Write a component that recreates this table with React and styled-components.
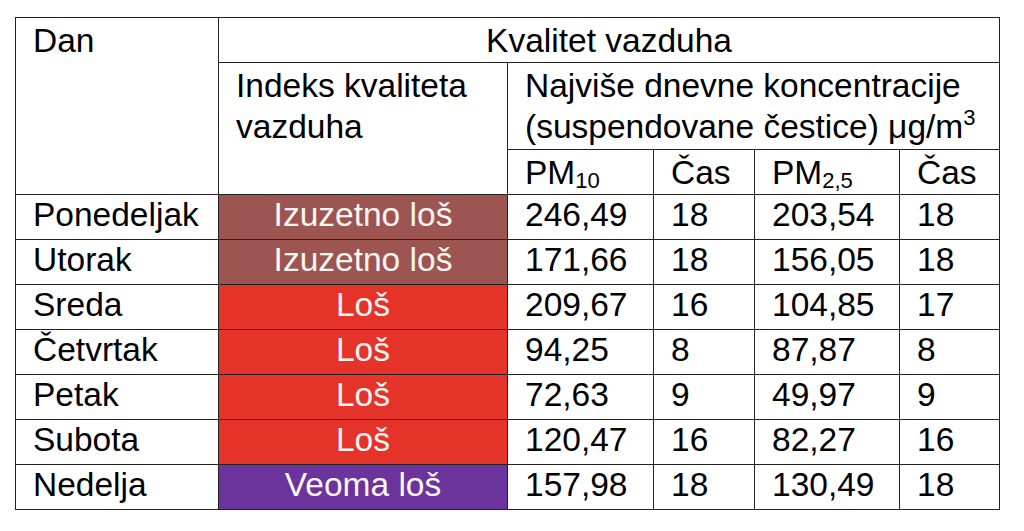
import React from "react";
import styled, { createGlobalStyle } from "styled-components";

const Global = createGlobalStyle`
  html, body { margin: 0; padding: 0; background: #fff; }
  body { font-family: "Liberation Sans", Arial, sans-serif; color: #000; }
`;

const Page = styled.div`
  padding: 17px 0 0 15px;
`;

const Table = styled.table`
  border-collapse: collapse;
  table-layout: fixed;
  width: 985px;
  font-family: "Liberation Sans", Arial, sans-serif;
  font-size: 33.5px;
  color: #000;
`;

const Col = styled.col`
  width: ${(p) => p.$w}px;
`;

const HeadRow = styled.tr`
  height: ${(p) => p.$h}px;
`;

const Th = styled.td`
  border: 1px solid #222;
  padding: 2px 17px 0 17px;
  line-height: 41px;
  vertical-align: top;
  text-align: ${(p) => (p.$center ? "center" : "left")};
  white-space: nowrap;
`;

const Row = styled.tr`
  height: 45px;
`;

const Td = styled.td`
  border: 1px solid #222;
  padding: 0 17px 0 17px;
  line-height: 39px;
  vertical-align: top;
  white-space: nowrap;
`;

const IndexCell = styled(Td)`
  background: ${(p) => p.$bg};
  color: #fbf6f4;
  text-align: center;
`;

const Sub = styled.sub`
  font-size: 22px;
  vertical-align: -4px;
  line-height: 0;
`;

const Sup = styled.sup`
  font-size: 22px;
  vertical-align: 13px;
  line-height: 0;
`;

const levels = {
  ext: { label: "Izuzetno loš", bg: "#9c5550" },
  bad: { label: "Loš", bg: "#e6332a" },
  very: { label: "Veoma loš", bg: "#6a349c" },
};

const rows = [
  ["Ponedeljak", "ext", "246,49", "18", "203,54", "18"],
  ["Utorak", "ext", "171,66", "18", "156,05", "18"],
  ["Sreda", "bad", "209,67", "16", "104,85", "17"],
  ["Četvrtak", "bad", "94,25", "8", "87,87", "8"],
  ["Petak", "bad", "72,63", "9", "49,97", "9"],
  ["Subota", "bad", "120,47", "16", "82,27", "16"],
  ["Nedelja", "very", "157,98", "18", "130,49", "18"],
];

export default function App() {
  return (
    <Page>
      <Global />
      <Table>
        <colgroup>
          <Col $w={203} />
          <Col $w={289} />
          <Col $w={146} />
          <Col $w={101} />
          <Col $w={145} />
          <Col $w={100} />
        </colgroup>
        <tbody>
          <HeadRow $h={45}>
            <Th rowSpan={3}>Dan</Th>
            <Th colSpan={5} $center>
              Kvalitet vazduha
            </Th>
          </HeadRow>
          <HeadRow $h={87}>
            <Th rowSpan={2}>
              Indeks kvaliteta
              <br />
              vazduha
            </Th>
            <Th colSpan={4}>
              Najviše dnevne koncentracije
              <br />
              (suspendovane čestice) μg/m<Sup>3</Sup>
            </Th>
          </HeadRow>
          <HeadRow $h={45}>
            <Th>
              PM<Sub>10</Sub>
            </Th>
            <Th>Čas</Th>
            <Th>
              PM<Sub>2,5</Sub>
            </Th>
            <Th>Čas</Th>
          </HeadRow>
          {rows.map(([day, lvl, pm10, t1, pm25, t2]) => (
            <Row key={day}>
              <Td>{day}</Td>
              <IndexCell $bg={levels[lvl].bg}>{levels[lvl].label}</IndexCell>
              <Td>{pm10}</Td>
              <Td>{t1}</Td>
              <Td>{pm25}</Td>
              <Td>{t2}</Td>
            </Row>
          ))}
        </tbody>
      </Table>
    </Page>
  );
}
